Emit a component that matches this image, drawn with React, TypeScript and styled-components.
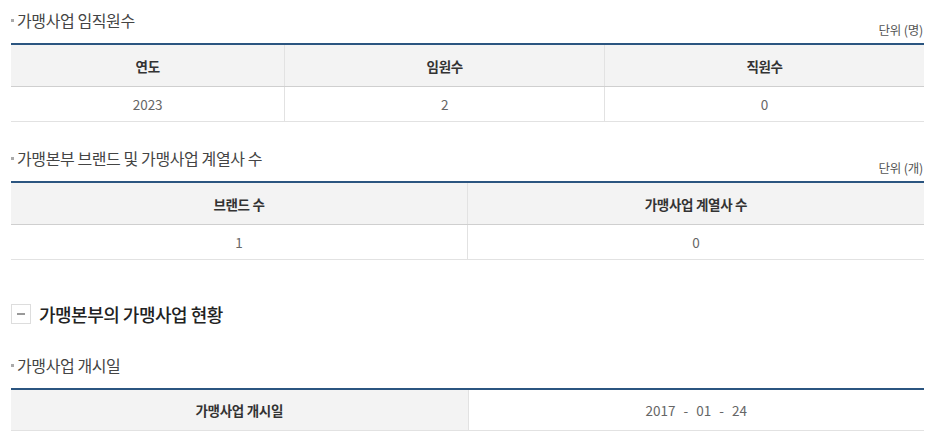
import React from "react";
import styled, { createGlobalStyle } from "styled-components";

const Global = createGlobalStyle`
  html, body { margin: 0; padding: 0; background: #fff; }
  body { font-family: "Noto Sans CJK KR", "Noto Sans", sans-serif; color: #333; }
`;

const Page = styled.div`
  width: 913px;
  padding: 0 0 0 11px;
`;

const Block = styled.section<{ $top: number }>`
  margin-top: ${(p) => p.$top}px;
`;

const TitleRow = styled.div`
  display: flex;
  justify-content: space-between;
  align-items: flex-end;
  height: 43px;
`;

const Title = styled.h3`
  margin: 0;
  align-self: flex-start;
  padding-top: 9px;
  display: flex;
  align-items: center;
  font-size: 16px;
  font-weight: 400;
  letter-spacing: -0.4px;
  color: #444;
  line-height: 22px;
  &::before {
    content: "";
    width: 3px;
    height: 3px;
    background: #aaa;
    margin-right: 3px;
    margin-top: 1px;
  }
`;

const Unit = styled.span`
  font-size: 12.5px;
  color: #555;
  letter-spacing: -0.2px;
  line-height: 16px;
  padding-bottom: 5px;
  padding-right: 1px;
`;

const Table = styled.table`
  width: 100%;
  border-collapse: collapse;
  table-layout: fixed;
  border-top: 2px solid #2b5580;
`;

const Th = styled.th<{ $w?: string }>`
  width: ${(p) => p.$w ?? "auto"};
  height: 41px;
  background: #f3f3f3;
  font-size: 13.5px;
  font-weight: 600;
  color: #333;
  letter-spacing: -0.3px;
  border-bottom: 1px solid #cfcfcf;
  border-left: 1px solid #e2e2e2;
  &:first-child { border-left: none; }
  padding: 0;
`;

const Td = styled.td`
  height: 34px;
  text-align: center;
  font-size: 13.5px;
  color: #666;
  border-bottom: 1px solid #e2e2e2;
  border-left: 1px solid #e2e2e2;
  &:first-child { border-left: none; }
  padding: 0;
`;

const RowTh = styled(Th)`
  height: 40px;
  border-bottom: 1px solid #e2e2e2;
`;

const DateTd = styled(Td)`
  word-spacing: 5px;
`;

const SectionHead = styled.h2`
  margin: 44px 0 0 0;
  display: flex;
  align-items: center;
  gap: 8px;
  font-size: 18px;
  font-weight: 500;
  color: #222;
  letter-spacing: -0.5px;
  line-height: 20px;
`;

const ToggleBox = styled.span`
  width: 18px;
  height: 18px;
  border: 1px solid #ddd;
  display: flex;
  align-items: center;
  justify-content: center;
  &::after {
    content: "";
    width: 8px;
    height: 2px;
    background: #999;
  }
`;

export default function App() {
  return (
    <Page>
      <Global />
      <Block $top={0}>
        <TitleRow>
          <Title>가맹사업 임직원수</Title>
          <Unit>단위 (명)</Unit>
        </TitleRow>
        <Table>
          <thead>
            <tr>
              <Th $w="30%">연도</Th>
              <Th $w="35%">임원수</Th>
              <Th $w="35%">직원수</Th>
            </tr>
          </thead>
          <tbody>
            <tr>
              <Td>2023</Td>
              <Td>2</Td>
              <Td>0</Td>
            </tr>
          </tbody>
        </Table>
      </Block>
      <Block $top={16}>
        <TitleRow>
          <Title>가맹본부 브랜드 및 가맹사업 계열사 수</Title>
          <Unit>단위 (개)</Unit>
        </TitleRow>
        <Table>
          <thead>
            <tr>
              <Th $w="50%">브랜드 수</Th>
              <Th $w="50%">가맹사업 계열사 수</Th>
            </tr>
          </thead>
          <tbody>
            <tr>
              <Td>1</Td>
              <Td>0</Td>
            </tr>
          </tbody>
        </Table>
      </Block>
      <SectionHead>
        <ToggleBox />
        가맹본부의 가맹사업 현황
      </SectionHead>
      <Block $top={21}>
        <TitleRow>
          <Title>가맹사업 개시일</Title>
        </TitleRow>
        <Table>
          <tbody>
            <tr>
              <RowTh $w="50%">가맹사업 개시일</RowTh>
              <DateTd>2017 - 01 - 24</DateTd>
            </tr>
          </tbody>
        </Table>
      </Block>
    </Page>
  );
}
